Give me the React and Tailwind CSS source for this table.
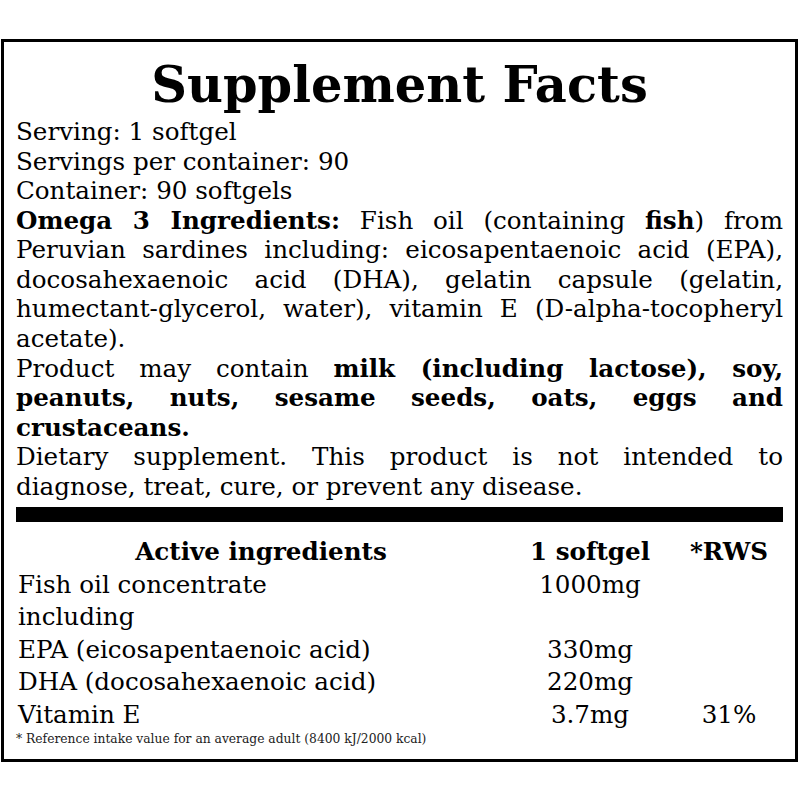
import React from 'react';

// each line of a paragraph is forced to justify, except the last one
function Para({ lines }) {
  return (
    <div>
      {lines.map((line, i) => (
        <div
          key={i}
          className={
            i < lines.length - 1
              ? 'h-[29.58px] text-justify [text-align-last:justify]'
              : 'h-[29.58px] text-left'
          }
        >
          {line}
        </div>
      ))}
    </div>
  );
}

const rows = [
  { name: 'Fish oil concentrate', amount: '1000mg', rws: '' },
  { name: 'including', amount: '', rws: '' },
  { name: 'EPA (eicosapentaenoic acid)', amount: '330mg', rws: '' },
  { name: 'DHA (docosahexaenoic acid)', amount: '220mg', rws: '' },
  { name: 'Vitamin E', amount: '3.7mg', rws: '31%' },
];

export default function App() {
  return (
    <div className="w-[800px] h-[800px] bg-white pt-[39px] pl-[1px] font-['DejaVu_Serif','Liberation_Serif',serif]">
      <div className="w-[797px] border-[3px] border-black bg-white px-3 pb-3 text-black">
        <h1 className="text-center font-bold text-[49.5px] leading-[60px] pt-[13px]">Supplement Facts</h1>

        <div className="mt-[2px] text-[24.6px] leading-[29.58px]">
          <div className="h-[29.58px]">Serving: 1 softgel</div>
          <div className="h-[29.58px]">Servings per container: 90</div>
          <div className="h-[29.58px]">Container: 90 softgels</div>
          <Para
            lines={[
              <><b>Omega 3 Ingredients:</b> Fish oil (containing <b>fish</b>) from</>,
              'Peruvian sardines including: eicosapentaenoic acid (EPA),',
              'docosahexaenoic acid (DHA), gelatin capsule (gelatin,',
              'humectant-glycerol, water), vitamin E (D-alpha-tocopheryl',
              'acetate).',
            ]}
          />
          <Para
            lines={[
              <>Product may contain <b>milk (including lactose), soy,</b></>,
              <b>peanuts, nuts, sesame seeds, oats, eggs and</b>,
              <b>crustaceans.</b>,
            ]}
          />
          <Para
            lines={[
              'Dietary supplement. This product is not intended to',
              'diagnose, treat, cure, or prevent any disease.',
            ]}
          />
        </div>

        <div className="mt-[5px] h-[15px] bg-black"></div>

        <div className="mt-[14.5px] grid grid-cols-[490px_168px_110px] text-[24.6px] leading-[32.5px]">
          <div className="text-center font-bold">Active ingredients</div>
          <div className="text-center font-bold">1 softgel</div>
          <div className="text-center font-bold">*RWS</div>
          {rows.map((r, i) => (
            <React.Fragment key={i}>
              <div className="pl-[2px]">{r.name}</div>
              <div className="text-center">{r.amount}</div>
              <div className="text-center">{r.rws}</div>
            </React.Fragment>
          ))}
        </div>

        <p className="text-[12.3px] leading-[16px] text-[#222]">
          * Reference intake value for an average adult (8400 kJ/2000 kcal)
        </p>
      </div>
    </div>
  );
}
